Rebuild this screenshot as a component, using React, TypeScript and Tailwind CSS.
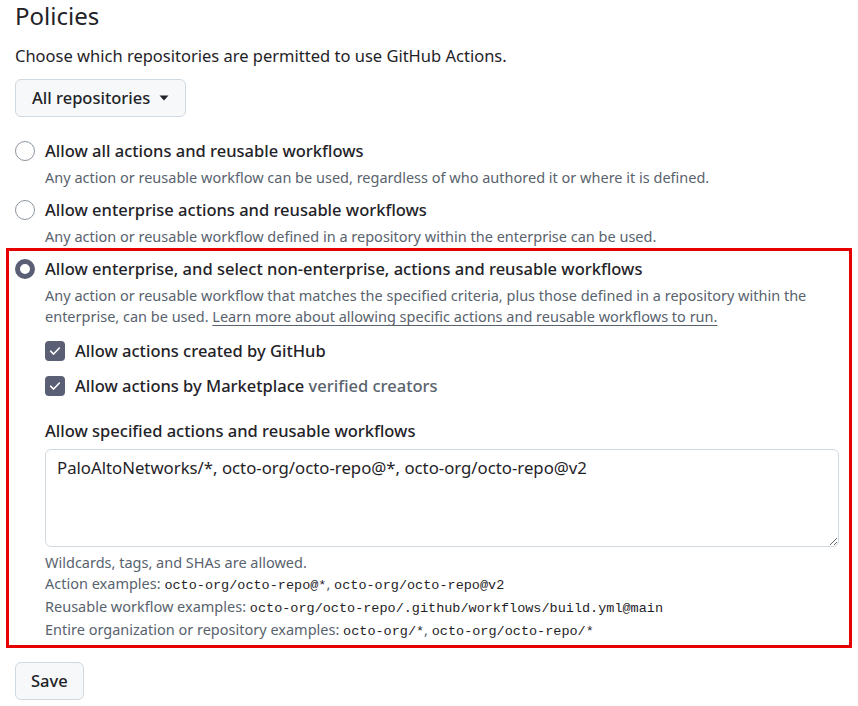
import { useState } from "react";

const sans = "font-['Noto_Sans','Open_Sans',sans-serif]";
const mono = "font-['Liberation_Mono','DejaVu_Sans_Mono',monospace]";

function Radio({ checked }: { checked?: boolean }) {
  return checked ? (
    <span className="mt-[2px] box-border block h-[20px] w-[20px] shrink-0 rounded-full border-[5px] border-[#5b5f75] bg-white" />
  ) : (
    <span className="mt-[2px] box-border block h-[20px] w-[20px] shrink-0 rounded-full border border-[#8c959f] bg-white" />
  );
}

function Checkbox() {
  return (
    <span className="flex h-[20px] w-[20px] shrink-0 items-center justify-center rounded-[4px] bg-[#5b5f75]">
      <svg width="14" height="14" viewBox="0 0 16 16" fill="none">
        <path d="M3 8.2 6.4 11.5 13 4.6" stroke="white" strokeWidth="1.8" strokeLinecap="round" strokeLinejoin="round" />
      </svg>
    </span>
  );
}

function Option({ title, desc, checked }: { title: string; desc: React.ReactNode; checked?: boolean }) {
  return (
    <div className="flex gap-[10px]">
      <Radio checked={checked} />
      <div>
        <div className="text-[16.5px] leading-[24px] font-medium text-[#1f2328]">{title}</div>
        <p className="mt-[4px] text-[14.5px] leading-[21px] text-[#59636e]">{desc}</p>
      </div>
    </div>
  );
}

export default function App() {
  const [value, setValue] = useState("PaloAltoNetworks/*, octo-org/octo-repo@*, octo-org/octo-repo@v2");

  return (
    <div className={`${sans} w-[858px] h-[706px] bg-white px-[6px] text-[#1f2328]`}>
      <div className="pl-[9px]">
        <h2 className="text-[24px] leading-[32px] font-normal">Policies</h2>
        <p className="mt-[12px] text-[16.5px] leading-[24px]">Choose which repositories are permitted to use GitHub Actions.</p>
        <button className="mt-[11px] flex h-[38px] items-center gap-[9px] rounded-[6px] border border-[#d1d9e0] bg-[#f6f8fa] px-[16px] text-[16.5px] font-medium">
          All repositories
          <svg width="10" height="6" viewBox="0 0 10 6">
            <path d="M0.5 0.5h9L5 5.5z" fill="#1f2328" />
          </svg>
        </button>

        <div className="mt-[22px] flex flex-col gap-[10px]">
          <Option
            title="Allow all actions and reusable workflows"
            desc="Any action or reusable workflow can be used, regardless of who authored it or where it is defined."
          />
          <Option
            title="Allow enterprise actions and reusable workflows"
            desc="Any action or reusable workflow defined in a repository within the enterprise can be used."
          />
        </div>
      </div>

      {/* highlighted option */}
      <div className="mt-[1px] border-[3px] border-[#e60000] pl-[6px] pr-[10px] pt-[6px] pb-[3px]">
        <Option
          checked
          title="Allow enterprise, and select non-enterprise, actions and reusable workflows"
          desc={
            <>
              Any action or reusable workflow that matches the specified criteria, plus those defined in a repository within the enterprise, can be used.{" "}
              <a className="underline decoration-[#59636e] underline-offset-[3px]">Learn more about allowing specific actions and reusable workflows to run.</a>
            </>
          }
        />

        <div className="ml-[30px] mt-[12px] flex flex-col gap-[11px]">
          <label className="flex items-center gap-[10px] text-[16.5px] leading-[24px] font-medium">
            <Checkbox />
            Allow actions created by GitHub
          </label>
          <label className="flex items-center gap-[10px] text-[16.5px] leading-[24px] font-medium">
            <Checkbox />
            <span>
              Allow actions by Marketplace <span className="text-[#59636e]">verified creators</span>
            </span>
          </label>
        </div>

        <div className="ml-[30px] mt-[21px]">
          <div className="text-[16.5px] leading-[24px] font-medium">Allow specified actions and reusable workflows</div>
          <textarea
            value={value}
            onChange={(e) => setValue(e.target.value)}
            className="mt-[6px] block h-[98px] w-full rounded-[6px] border border-[#d1d9e0] px-[11px] py-[6px] text-[16.75px] leading-[24px] text-[#1f2328] outline-none"
          />
          <div className="mt-[5px] text-[14.5px] leading-[21px] text-[#59636e]">
            <p>Wildcards, tags, and SHAs are allowed.</p>
            <p>
              Action examples: <code className={`${mono} text-[13.5px] text-[#1f2328]`}>octo-org/octo-repo@*</code>,{" "}
              <code className={`${mono} text-[13.5px] text-[#1f2328]`}>octo-org/octo-repo@v2</code>
            </p>
            <p>
              Reusable workflow examples:{" "}
              <code className={`${mono} text-[13.5px] text-[#1f2328]`}>octo-org/octo-repo/.github/workflows/build.yml@main</code>
            </p>
            <p>
              Entire organization or repository examples: <code className={`${mono} text-[13.5px] text-[#1f2328]`}>octo-org/*</code>,{" "}
              <code className={`${mono} text-[13.5px] text-[#1f2328]`}>octo-org/octo-repo/*</code>
            </p>
          </div>
        </div>
      </div>

      <div className="pl-[9px]">
        <button className="mt-[14px] h-[38px] rounded-[6px] border border-[#d1d9e0] bg-[#f6f8fa] px-[15px] text-[16.5px] font-medium">
          Save
        </button>
      </div>
    </div>
  );
}
